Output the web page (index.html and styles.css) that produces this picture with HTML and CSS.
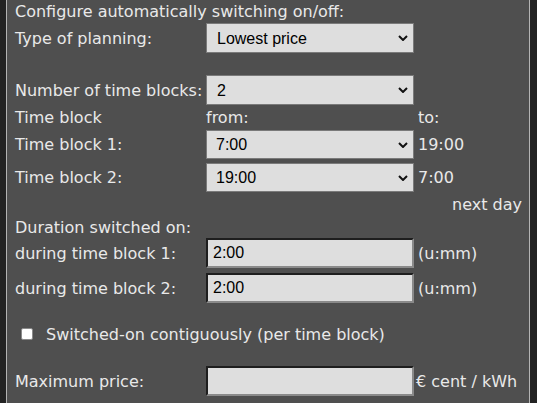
FILE: index.html
```html
<!DOCTYPE html>
<html>
<head>
<meta charset="utf-8">
<link rel="stylesheet" href="styles.css">
</head>
<body>
<div class="panel">
  <div class="row r-title"><span class="span-all">Configure automatically switching on/off:</span></div>
  <div class="row r-ctl">
    <span>Type of planning:</span>
    <select class="sel"><option>Lowest price</option></select>
  </div>
  <div class="row r-ctl r-after-gap">
    <span>Number of time blocks:</span>
    <select class="sel"><option>2</option></select>
  </div>
  <div class="row r-head">
    <span>Time block</span><span>from:</span><span class="aside">to:</span>
  </div>
  <div class="row r-block">
    <span>Time block 1:</span>
    <select class="sel sel-sm"><option>7:00</option></select>
    <span class="aside">19:00</span>
  </div>
  <div class="row r-block r-block2">
    <span>Time block 2:</span>
    <select class="sel sel-sm"><option>19:00</option></select>
    <span class="aside">7:00</span>
  </div>
  <div class="row r-next"><span class="next">next day</span></div>
  <div class="row r-dur"><span class="span-all">Duration switched on:</span></div>
  <div class="row r-ctl">
    <span>during time block 1:</span>
    <input class="inp" type="text" value="2:00">
    <span class="aside">(u:mm)</span>
  </div>
  <div class="row r-ctl r-inp2">
    <span>during time block 2:</span>
    <input class="inp" type="text" value="2:00">
    <span class="aside">(u:mm)</span>
  </div>
  <label class="check-row"><input class="chk" type="checkbox"><span>Switched-on contiguously (per time block)</span></label>
  <div class="row r-ctl r-price">
    <span>Maximum price:</span>
    <input class="inp" type="text" value="">
    <span class="aside price-unit">€ cent / kWh</span>
  </div>
</div>
</body>
</html>
```
FILE: styles.css
```css
html, body {
  margin: 0;
  padding: 0;
  background: #232323;
  height: 100%;
  overflow: hidden;
}
.panel {
  margin-left: 6px;
  width: 524px;
  box-sizing: border-box;
  height: 100%;
  background: #4f4f4f;
  border-left: 1px solid #b4b4b4;
  border-right: 1px solid #b4b4b4;
  color: #e9e9e9;
  font-family: "DejaVu Sans", Verdana, sans-serif;
  font-size: 16px;
  padding: 0 7px 0 8px;
}
.row {
  display: grid;
  grid-template-columns: 191px 208px 1fr;
  align-items: center;
}
.span-all { grid-column: 1 / -1; }
.r-title { height: 23px; }
.r-ctl { height: 30px; }
.r-after-gap { margin-top: 22px; }
.r-head { height: 24px; }
.r-block { height: 29px; margin-top: 1px; }
.r-block2 { margin-top: 4px; }
.r-next { height: 25px; grid-template-columns: 1fr; }
.next { justify-self: end; }
.r-dur { height: 21px; }
.r-inp2 { margin-top: 5px; }
.r-price { margin-top: 0; }
.aside { padding-left: 4px; white-space: nowrap; }
.price-unit { padding-left: 2px; }
.sel {
  appearance: none;
  -webkit-appearance: none;
  height: 30px;
  width: 208px;
  box-sizing: border-box;
  border: 1px solid #7a7a7a;
  background: #dedede url("data:image/svg+xml;utf8,<svg xmlns='http://www.w3.org/2000/svg' width='10' height='6' viewBox='0 0 10 6'><path d='M1 1 L5 5 L9 1' fill='none' stroke='%23111' stroke-width='2'/></svg>") no-repeat right 5px center;
  color: #000;
  font-family: "Liberation Sans", Arial, sans-serif;
  font-size: 16px;
  padding: 0 0 0 10px;
  margin: 0;
  border-radius: 0;
}
.sel-sm { height: 29px; padding-left: 9px; }
.inp {
  height: 30px;
  width: 208px;
  box-sizing: border-box;
  margin: 0;
  background: #dedede;
  border-style: solid;
  border-width: 2px;
  border-color: #1e1e1e #8a8a8a #8a8a8a #1e1e1e;
  color: #000;
  font-family: "Liberation Sans", Arial, sans-serif;
  font-size: 16px;
  padding: 0 0 0 5px;
}
.check-row {
  display: flex;
  align-items: center;
  height: 30px;
  margin-top: 16px;
  margin-bottom: 17px;
}
.chk {
  appearance: none;
  -webkit-appearance: none;
  width: 12px;
  height: 12px;
  margin: 0 13px 0 6px;
  background: #fff;
  border: 1px solid #8a8a8a;
  border-radius: 2px;
}
```
